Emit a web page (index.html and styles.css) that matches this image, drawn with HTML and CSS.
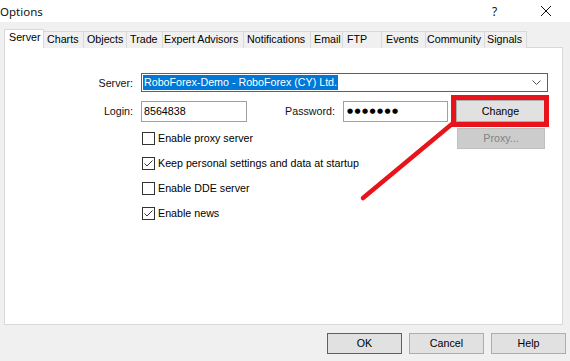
FILE: index.html
```html
<!DOCTYPE html>
<html>
<head>
<meta charset="utf-8">
<link rel="stylesheet" href="styles.css">
</head>
<body>
<div class="window">
  <div class="titlebar">
    <span class="title">Options</span>
    <span class="help">?</span>
    <svg class="close" width="12" height="12" viewBox="0 0 12 12"><path d="M1 1 L11 11 M11 1 L1 11" stroke="#111" stroke-width="1" fill="none"/></svg>
  </div>
  <div class="tabs">
    <div class="tab active t-server">Server</div>
    <div class="tab t-charts">Charts</div>
    <div class="tab t-objects">Objects</div>
    <div class="tab t-trade">Trade</div>
    <div class="tab t-expert">Expert Advisors</div>
    <div class="tab t-notif">Notifications</div>
    <div class="tab t-email">Email</div>
    <div class="tab t-ftp">FTP</div>
    <div class="tab t-events">Events</div>
    <div class="tab t-community">Community</div>
    <div class="tab t-signals">Signals</div>
  </div>
  <div class="panel">
    <div class="row row-server">
      <span class="label">Server:</span>
      <div class="combo">
        <span class="combo-value">RoboForex-Demo - RoboForex (CY) Ltd.</span>
        <svg class="chevron" width="9" height="5" viewBox="0 0 9 5"><path d="M0.5 0.5 L4.5 4.5 L8.5 0.5" stroke="#555" stroke-width="1" fill="none"/></svg>
      </div>
    </div>
    <div class="row row-login">
      <span class="label">Login:</span>
      <div class="input input-login">8564838</div>
      <span class="label label-pass">Password:</span>
      <div class="input input-pass"><span class="dots">●●●●●●●</span></div>
      <div class="btn btn-change">Change</div>
    </div>
    <div class="row row-options">
      <div class="checks">
        <div class="check"><span class="box"></span><span>Enable proxy server</span></div>
        <div class="check"><span class="box"><svg width="11" height="11" viewBox="0 0 11 11"><path d="M1.5 5.5 L4 8 L9.5 2.5" stroke="#333" stroke-width="1" fill="none"/></svg></span><span>Keep personal settings and data at startup</span></div>
        <div class="check"><span class="box"></span><span>Enable DDE server</span></div>
        <div class="check"><span class="box"><svg width="11" height="11" viewBox="0 0 11 11"><path d="M1.5 5.5 L4 8 L9.5 2.5" stroke="#333" stroke-width="1" fill="none"/></svg></span><span>Enable news</span></div>
      </div>
      <div class="btn btn-proxy">Proxy...</div>
    </div>
  </div>
  <div class="footer">
    <div class="btn btn-ok">OK</div>
    <div class="btn">Cancel</div>
    <div class="btn">Help</div>
  </div>
  <svg class="annotation" width="570" height="361" viewBox="0 0 570 361">
    <rect x="453.5" y="97.5" width="93" height="27" fill="none" stroke="#e8141c" stroke-width="5"/>
    <path d="M363 198 L452 124" stroke="#e8141c" stroke-width="4.5" stroke-linecap="round" fill="none"/>
  </svg>
</div>
</body>
</html>
```

FILE: styles.css
```css
* { box-sizing: border-box; }
html, body { margin: 0; padding: 0; }
body {
  width: 570px;
  height: 361px;
  overflow: hidden;
  background: #f0f0f0;
  font-family: "Liberation Sans", Arial, sans-serif;
  font-size: 10.7px;
  color: #000;
}
.window { position: relative; width: 570px; height: 361px; }
.titlebar {
  height: 22px;
  background: #fff;
  display: flex;
  align-items: center;
}
.title {
  font-family: "Noto Sans", "Open Sans", sans-serif;
  font-size: 11.5px;
  color: #111;
  flex: 1;
  padding-left: 0;
}
.help {
  font-family: "Noto Sans", sans-serif;
  font-size: 12px;
  color: #111;
  width: 12px;
  margin-right: 36px;
}
.close { margin-right: 18px; }

.tabs {
  display: flex;
  align-items: flex-end;
  margin-top: 7px;
  padding-left: 4px;
  height: 19px;
  margin-bottom: -1px;
  position: relative;
  z-index: 2;
}
.tab {
  height: 17px;
  line-height: 15px;
  border: 1px solid #d9d9d9;
  border-bottom: none;
  background: #f0f0f0;
  padding-left: 3px;
  margin-right: -1px;
  white-space: nowrap;
  overflow: hidden;
}
.tab.active {
  height: 19px;
  background: #fff;
  padding-left: 4px;
}
.t-server { width: 40px; }
.t-charts { width: 41px; }
.t-objects { width: 44px; }
.t-trade { width: 37px; }
.t-expert { width: 82px; padding-left: 1px; }
.t-notif { width: 68px; }
.t-email { width: 33px; }
.t-ftp { width: 40px; padding-left: 4px; }
.t-events { width: 45px; padding-left: 4px; }
.t-community { width: 60px; padding-left: 1px; }
.t-signals { width: 43px; padding-left: 2px; }

.panel {
  margin-left: 4px;
  width: 559px;
  height: 278px;
  background: #fff;
  border: 1px solid #d9d9d9;
  position: relative;
  z-index: 1;
}
.row { display: flex; align-items: center; }
.label {
  width: 128px;
  text-align: right;
  margin-right: 8px;
  color: #111;
}
.row-server { margin-top: 25px; height: 19px; }
.combo {
  width: 407px;
  height: 19px;
  border: 1px solid #0078d7;
  padding: 1px 1px;
  display: flex;
  align-items: center;
}
.combo-value {
  background: #0078d7;
  color: #fff;
  height: 15px;
  line-height: 15px;
  padding: 0 1px;
  flex: 0 0 auto;
}
.chevron { margin-left: auto; margin-right: 5px; }

.row-login { margin-top: 8px; height: 22px; }
.input {
  height: 21px;
  border: 1px solid #a0a0a0;
  line-height: 19px;
  padding-left: 2px;
  background: #fff;
}
.input-login { width: 106px; }
.label-pass { width: 88px; }
.input-pass { width: 105px; margin-right: 8px; }
.dots {
  font-family: "DejaVu Sans", sans-serif;
  font-size: 7px;
  letter-spacing: 1.4px;
  padding-left: 1px;
  vertical-align: top;
}
.btn {
  width: 75px;
  height: 21px;
  background: #e1e1e1;
  border: 1px solid #adadad;
  text-align: center;
  line-height: 19px;
  color: #000;
}
.btn-change { width: 89px; height: 22px; line-height: 20px; }

.row-options {
  margin-top: 6px;
  align-items: flex-start;
  padding-left: 137px;
}
.checks { width: 315px; padding-top: 4px; }
.check {
  display: flex;
  height: 25px;
  align-items: flex-start;
}
.box {
  width: 13px;
  height: 13px;
  border: 1px solid #333;
  margin-right: 3px;
  display: flex;
  align-items: center;
  justify-content: center;
  flex: 0 0 auto;
  background: #fff;
}
.check span:last-child { line-height: 13px; }
.btn-proxy {
  width: 88px;
  background: #cccccc;
  border-color: #bfbfbf;
  color: #838383;
}

.footer {
  display: flex;
  justify-content: flex-end;
  gap: 7px;
  margin-top: 8px;
  padding-right: 4px;
}
.btn-ok { border-color: #0078d7; }

.annotation {
  position: absolute;
  left: 0;
  top: 0;
  pointer-events: none;
  z-index: 5;
}
```
